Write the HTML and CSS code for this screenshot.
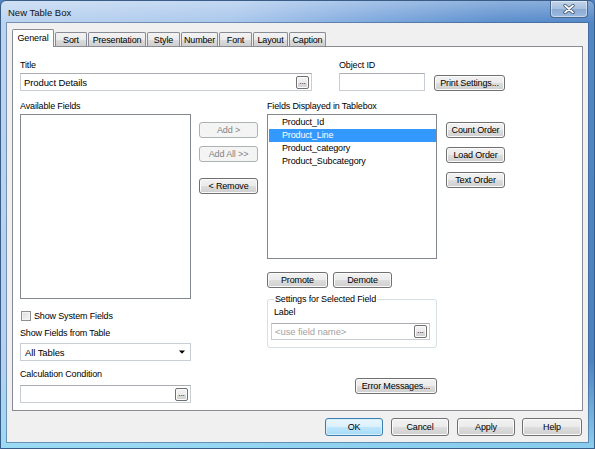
FILE: index.html
```html
<!DOCTYPE html>
<html>
<head>
<meta charset="utf-8">
<title>New Table Box</title>
<link rel="stylesheet" href="styles.css">
</head>
<body>
<div class="window">
  <div class="titlebar">
    <span class="wtitle">New Table Box</span>
    <div class="close">
      <svg width="12" height="10" viewBox="0 0 12 10"><path d="M2 1.5 L10 8.5 M10 1.5 L2 8.5" stroke="#33465f" stroke-width="3.2" stroke-linecap="round"/><path d="M2 1.5 L10 8.5 M10 1.5 L2 8.5" stroke="#ffffff" stroke-width="1.7" stroke-linecap="round"/></svg>
    </div>
  </div>
  <div class="client">
    <div class="tabs">
      <div class="tab active t-general">General</div>
      <div class="tab t-sort">Sort</div>
      <div class="tab t-pres">Presentation</div>
      <div class="tab t-style">Style</div>
      <div class="tab t-number">Number</div>
      <div class="tab t-font">Font</div>
      <div class="tab t-layout">Layout</div>
      <div class="tab t-caption">Caption</div>
    </div>
    <div class="panel">
      <div class="toprow">
        <div class="field f-title">
          <div class="lbl">Title</div>
          <div class="input">
            <span class="val">Product Details</span>
            <span class="dots">...</span>
          </div>
        </div>
        <div class="field f-objid">
          <div class="lbl">Object ID</div>
          <div class="input"></div>
        </div>
        <div class="btn b-print">Print Settings...</div>
      </div>
      <div class="mainrow">
        <div class="col c-left">
          <div class="lbl">Available Fields</div>
          <div class="listbox l-avail"></div>
          <div class="check">
            <span class="box"></span>
            <span>Show System Fields</span>
          </div>
          <div class="lbl l-gap1">Show Fields from Table</div>
          <div class="input combo">
            <span class="val">All Tables</span>
            <svg class="arrow" width="6" height="4" viewBox="0 0 6 4"><path d="M0 0.5 H6 L3 3.8 Z" fill="#000"/></svg>
          </div>
          <div class="lbl l-gap2">Calculation Condition</div>
          <div class="input i-calc">
            <span class="val"></span>
            <span class="dots">...</span>
          </div>
        </div>
        <div class="col c-mid">
          <div class="btn disabled b-add">Add &gt;</div>
          <div class="btn disabled b-addall">Add All &gt;&gt;</div>
          <div class="btn b-remove">&lt; Remove</div>
        </div>
        <div class="col c-center">
          <div class="lbl">Fields Displayed in Tablebox</div>
          <div class="listbox l-fields">
            <div class="item">Product_Id</div>
            <div class="item sel">Product_Line</div>
            <div class="item">Product_category</div>
            <div class="item">Product_Subcategory</div>
          </div>
          <div class="pdrow">
            <div class="btn b-promote">Promote</div>
            <div class="btn b-demote">Demote</div>
          </div>
          <fieldset class="group">
            <legend>Settings for Selected Field</legend>
            <div class="lbl g-lbl">Label</div>
            <div class="input i-label">
              <span class="val placeholder">&lt;use field name&gt;</span>
              <span class="dots">...</span>
            </div>
          </fieldset>
          <div class="btn b-error">Error Messages...</div>
        </div>
        <div class="col c-right">
          <div class="btn b-order1">Count Order</div>
          <div class="btn b-order">Load Order</div>
          <div class="btn b-order">Text Order</div>
        </div>
      </div>
    </div>
    <div class="footer">
      <div class="btn default">OK</div>
      <div class="btn">Cancel</div>
      <div class="btn">Apply</div>
      <div class="btn b-help">Help</div>
    </div>
  </div>
</div>
</body>
</html>
```
FILE: styles.css
```css
* { box-sizing: border-box; }
html, body { margin: 0; padding: 0; }
body {
  width: 595px;
  height: 449px;
  overflow: hidden;
  background: #4f83c3;
  font-family: "Liberation Sans", Arial, sans-serif;
  font-size: 9px;
  letter-spacing: -0.15px;
  color: #000;
}

.window {
  width: 595px;
  height: 449px;
  display: flex;
  flex-direction: column;
  border: 1px solid #3a5d88;
  border-radius: 6px 6px 0 0;
  background:
    linear-gradient(180deg, rgba(255,255,255,0) 80%, rgba(150,220,245,0.85) 100%),
    linear-gradient(180deg, rgba(255,255,255,0.3) 0, rgba(255,255,255,0) 22px),
    linear-gradient(100deg, #bcd4f0 0%, #a9c7ec 35%, #7fa9de 55%, #5a8ecd 75%, #4a80c3 100%);
}

.titlebar {
  height: 22px;
  display: flex;
  align-items: center;
  padding-left: 7px;
}
.wtitle {
  font-size: 9.5px;
  letter-spacing: 0;
  color: #111;
}
.close {
  margin-left: auto;
  margin-right: 6px;
  align-self: flex-start;
  width: 38px;
  height: 17px;
  border: 1px solid #4a6890;
  border-top: none;
  border-radius: 0 0 4px 4px;
  background: linear-gradient(180deg, #c3d5ea 0%, #a6c0e0 50%, #8aaad3 51%, #9cbbe0 100%);
  box-shadow: inset 0 0 0 1px rgba(255,255,255,0.45);
  display: flex;
  align-items: center;
  justify-content: center;
}

.client {
  flex: 1;
  margin: 0 6px 6px 6px;
  background: #f0f0f0;
  box-shadow: 0 0 0 1px rgba(60,90,130,0.55);
  padding: 6px 5px 0 5px;
  display: flex;
  flex-direction: column;
}

/* tabs */
.tabs {
  height: 18px;
  display: flex;
  align-items: flex-end;
  margin-bottom: -1px;
  position: relative;
  z-index: 1;
}
.tab {
  height: 14px;
  margin-bottom: 1px;
  border: 1px solid #898c95;
  border-bottom: none;
  border-radius: 2px 2px 0 0;
  background: linear-gradient(180deg, #f3f3f3 0%, #ebebeb 50%, #dddddd 51%, #cfcfcf 100%);
  display: flex;
  align-items: center;
  justify-content: center;
  padding-top: 1px;
  margin-left: 1px;
}
.tab.active {
  height: 18px;
  margin-bottom: 0;
  margin-left: 0;
  background: #fff;
  padding-top: 0;
  padding-bottom: 2px;
}
.t-general { width: 42px; }
.t-sort { width: 32px; }
.t-pres { width: 58px; }
.t-style { width: 33px; }
.t-number { width: 37px; }
.t-font { width: 33px; }
.t-layout { width: 35px; }
.t-caption { width: 37px; }

.panel {
  height: 365px;
  flex: none;
  background: #fff;
  border: 1px solid #898c95;
  padding: 13px 0 0 7px;
}

.lbl {
  height: 11px;
  line-height: 11px;
  white-space: nowrap;
}

.toprow {
  display: flex;
  align-items: flex-end;
}
.field .input { margin-top: 2px; }
.f-title { width: 292px; }
.f-objid { width: 86px; margin-left: 27px; }

.input {
  height: 18px;
  background: #fff;
  border: 1px solid #c9cdd4;
  border-top-color: #abadb3;
  display: flex;
  align-items: center;
  padding: 0 2px 0 3px;
  white-space: nowrap;
}
.input .val { flex: 1; font-size: 9.5px; letter-spacing: -0.1px; }
.placeholder { color: #a3a3a3; }

.dots {
  width: 13px;
  height: 13px;
  border: 1px solid #707070;
  border-radius: 2px;
  background: linear-gradient(180deg, #f4f4f4 0%, #ebebeb 50%, #dcdcdc 51%, #d0d0d0 100%);
  box-shadow: inset 0 0 0 1px #fbfbfb;
  font-size: 8px;
  line-height: 9px;
  text-align: center;
  letter-spacing: 0;
  flex: none;
}

.btn {
  height: 16px;
  border: 1px solid #707070;
  border-radius: 3px;
  background: linear-gradient(180deg, #f2f2f2 0%, #ebebeb 50%, #dddddd 51%, #cfcfcf 100%);
  box-shadow: inset 0 0 0 1px #fbfbfb;
  display: flex;
  align-items: center;
  justify-content: center;
  white-space: nowrap;
  flex: none;
}
.btn.disabled {
  border-color: #adb2b5;
  background: #f4f4f4;
  color: #838383;
  box-shadow: none;
}
.btn.default {
  border-color: #3c7fb1;
  background: linear-gradient(180deg, #eaf6fd 0%, #d9f0fc 50%, #bee6fd 51%, #a7d9f5 100%);
  box-shadow: inset 0 0 0 1px #d6eefb;
}

.b-print { width: 71px; margin-left: 9px; margin-bottom: 0; }

.mainrow {
  display: flex;
  margin-top: 10px;
}
.col { display: flex; flex-direction: column; }
.c-left { width: 171px; }
.c-mid { width: 59px; margin-left: 8px; }
.c-center { width: 170px; margin-left: 9px; }
.c-right { width: 59px; margin-left: 9px; }

.listbox {
  margin-top: 2px;
  background: #fff;
  border: 1px solid #828790;
  padding: 1px 0 0 1px;
}
.l-avail { height: 185px; }
.l-fields { height: 145px; }
.item {
  height: 13px;
  line-height: 13px;
  padding-left: 13px;
  white-space: nowrap;
}
.item.sel {
  background: #3399ff;
  color: #fff;
}

.check {
  margin-top: 11px;
  height: 12px;
  display: flex;
  align-items: center;
  padding-left: 1px;
}
.check .box {
  width: 10px;
  height: 10px;
  border: 1px solid #8e8f8f;
  background: linear-gradient(135deg, #dcdcdc, #f8f8f8);
  box-shadow: inset 0 0 0 1px #f4f4f4;
  margin-right: 3px;
}
.l-gap1 { margin-top: 6px; }
.combo { margin-top: 4px; padding: 0 5px 0 4px; border-color: #c9cdd4; }
.l-gap2 { margin-top: 8px; }
.i-calc { margin-top: 5px; padding-right: 2px; }

.b-add { margin-top: 21px; }
.b-addall { margin-top: 8px; }
.b-remove { margin-top: 16px; }

.pdrow { display: flex; margin-top: 13px; }
.b-promote { width: 61px; }
.b-demote { width: 59px; margin-left: 5px; }

.group {
  margin: 6px 0 0 0;
  border: 1px solid #d5dfe5;
  border-radius: 3px;
  padding: 3px 5px 7px 3px;
  min-width: 0;
}
.group legend {
  margin-left: 3px;
  padding: 0 1px;
  line-height: 10px;
  height: 10px;
}
.g-lbl { margin-left: 3px; }
.i-label { margin-top: 5px; height: 17px; width: 159px; }

.b-error { width: 82px; margin-top: 30px; align-self: flex-end; }

.b-order1 { margin-top: 21px; }
.b-order { margin-top: 9px; }

.footer {
  display: flex;
  justify-content: flex-end;
  padding: 7px 1px 0 0;
}
.footer .btn {
  width: 58px;
  height: 18px;
  margin-left: 8px;
}
.footer .b-help { width: 60px; margin-left: 7px; }
```
